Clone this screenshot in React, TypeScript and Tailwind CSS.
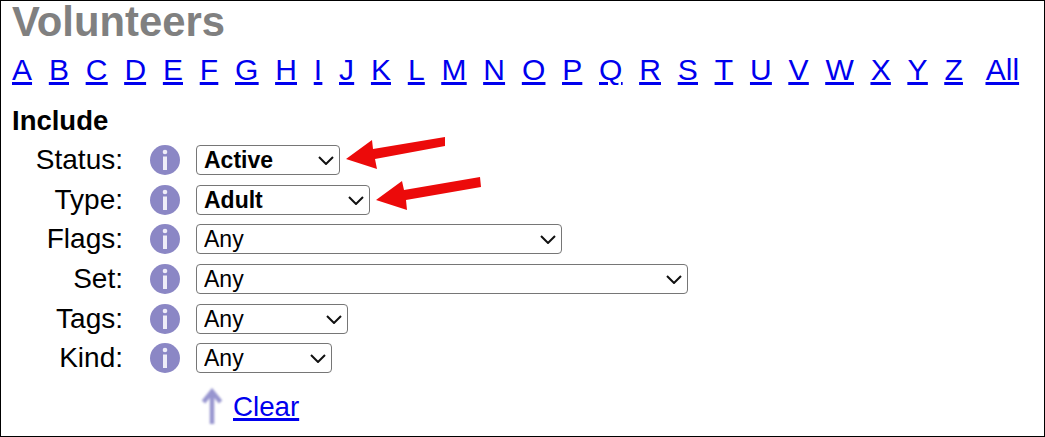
import React from 'react'

const letters = 'ABCDEFGHIJKLMNOPQRSTUVWXYZ'.split('')

const rows = [
  { label: 'Status', value: 'Active', width: 'w-[144px]', bold: true },
  { label: 'Type', value: 'Adult', width: 'w-[174px]', bold: true },
  { label: 'Flags', value: 'Any', width: 'w-[366px]', bold: false },
  { label: 'Set', value: 'Any', width: 'w-[492px]', bold: false },
  { label: 'Tags', value: 'Any', width: 'w-[152px]', bold: false },
  { label: 'Kind', value: 'Any', width: 'w-[136px]', bold: false },
]

const InfoIcon = () => (
  <svg width="30" height="30" viewBox="0 0 30 30">
    <circle cx="15" cy="15" r="15" fill="#8b87c5" />
    <circle cx="15" cy="7" r="2.3" fill="#eeedf8" />
    <rect x="13" y="11.5" width="4" height="13.5" fill="#eeedf8" />
  </svg>
)

const Chevron = () => (
  <svg width="16" height="10" viewBox="0 0 16 10" className="absolute right-[6px] top-[10px] pointer-events-none">
    <path d="M1 2 L8 9 L15 2" fill="none" stroke="#111" strokeWidth="2" />
  </svg>
)

const Arrow = ({ className, d }: { className: string; d: string }) => (
  <svg width="106" height="44" viewBox="0 0 106 44" className={className}>
    <path d={d} fill="#ec0a0a" />
  </svg>
)

export default function App() {
  return (
    <div className="relative w-[1045px] h-[437px] bg-white border border-black pl-[11px] font-['Liberation_Sans',Arial,sans-serif] text-black">
      <h1 className="text-[41.8px] leading-[41px] font-bold text-[#808080]">Volunteers</h1>
      <div className="flex gap-[16.9px] mt-[11px] text-[30px] leading-[34px] text-[#0000ee] underline decoration-[2.5px]">
        {letters.map((l) => (
          <a key={l} href="#">{l}</a>
        ))}
        <a href="#" className="ml-[6px]">All</a>
      </div>
      <div className="mt-[18px] text-[27.5px] leading-[32px] font-bold">Include</div>
      <div className="mt-[3.4px] flex flex-col">
        {rows.map((r) => (
          <div key={r.label} className="flex items-center h-[39.6px]">
            <div className="w-[111px] text-right text-[28px]">{r.label}:</div>
            <div className="ml-[27px] flex"><InfoIcon /></div>
            <div className={`relative ml-[16px] h-[30px] ${r.width}`}>
              <select
                defaultValue={r.value}
                className={`w-full h-full appearance-none border border-[#767676] rounded-[4px] bg-white pl-[7px] text-[23px] leading-[26px] text-black ${r.bold ? 'font-bold' : 'font-normal'}`}
              >
                <option>{r.value}</option>
              </select>
              <Chevron />
            </div>
          </div>
        ))}
      </div>
      <div className="flex items-center ml-[187px] mt-[10px] gap-[8px]">
        <svg width="26" height="38" viewBox="0 0 26 38" className="blur-[1px]">
          <path d="M13 3 V36 M4.5 14 L13 3.5 L21.5 14" fill="none" stroke="#9795cf" strokeWidth="4.5" />
        </svg>
        <a href="#" className="text-[27.7px] leading-[32px] text-[#0000ee] underline decoration-[2.5px]">Clear</a>
      </div>
      <Arrow className="absolute left-[345px] top-[130px]" d="M0 28 L26 9 L27 18 L99 6 L99 15 L29 28 L31 38 Z" />
      <Arrow className="absolute left-[375px] top-[171px]" d="M0 28 L26 9 L28 18 L104 5 L105 15 L30 28 L31 38 Z" />
    </div>
  )
}
